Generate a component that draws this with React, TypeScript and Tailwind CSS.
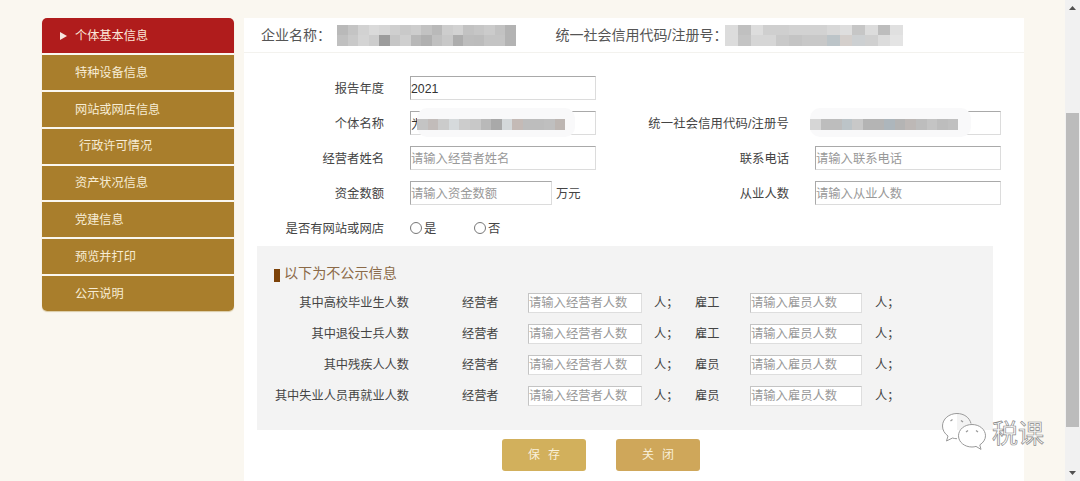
const menu = ["个体基本信息", "特种设备信息", "网站或网店信息", "行政许可情况", "资产状况信息", "党建信息", "预览并打印", "公示说明"];

const hidden = [
  { name: "其中高校毕业生人数", staff: "雇工" },
  { name: "其中退役士兵人数", staff: "雇工" },
  { name: "其中残疾人人数", staff: "雇员" },
  { name: "其中失业人员再就业人数", staff: "雇员" },
];

const nameCells = [
  ["#b9b9b9", "#c4c4c4", "#d2d2d2", "#dadada", "#d6d6d6", "#cfcfcf", "#c9c9c9", "#cdcdcd", "#c2c2c2", "#b9b9b9", "#cdcdcd", "#d2d2d2", "#c2c2c2", "#c6c6c6", "#cbcbcb", "#c2c2c2", "#b3b3b3"],
  ["#c0c0c0", "#c9c9c9", "#d4d4d4", "#cdcdcd", "#9c9c9c", "#c6c6c6", "#cfcfcf", "#b8b8b8", "#b0b0b0", "#c0c0c0", "#c8c8c8", "#adadad", "#bdbdbd", "#bcbcbc", "#c4c4c4", "#c4c4c4", "#b3b3b3"],
];

const codeCells = [
  ["#dcdcdc", "#c0c0c0", "#dddddd", "#cfcfcf", "#cfcfcf", "#d2d2d2", "#d2d2d2", "#d2d2d2", "#d8d8d8", "#dedede", "#c6c6c6", "#dcdcdc", "#bdbdbd", "#e0e0e0"],
  ["#dcdcdc", "#c4c4c4", "#d6d6d6", "#d6d6d6", "#c9c9c9", "#c4c4c4", "#c8c8c8", "#c8c8c8", "#bcc4c8", "#d4cfcc", "#cdd0d2", "#d0d0d0", "#dcdcdc", "#e4e4e4"],
];

const fieldA = ["#c4c4c4", "#c2bcba", "#cbcbcb", "#d6dadc", "#cccccc", "#c8c8c8", "#b9b9b9", "#a9a9a9", "#d4d8da", "#c4bab6", "#bdbdbd", "#bdbdbd", "#bfbfbf", "#bdb6b2"];
const fieldB = ["#d6d6d6", "#bdbdbd", "#bdbdbd", "#bcc4c8", "#c8c8c8", "#b4b4b4", "#b4b4b4", "#adb6bc", "#b4b4b4", "#bdb8b6", "#bdbdbd", "#c4c4c4", "#bdbdbd", "#c0c0c0"];

function Mosaic({ rows, cell }: { rows: string[][]; cell: string }) {
  return (
    <div className="flex flex-col">
      {rows.map((row, i) => (
        <div key={i} className="flex">
          {row.map((c, j) => (
            <div key={j} className={cell} style={{ backgroundColor: c }} />
          ))}
        </div>
      ))}
    </div>
  );
}

function Field({ placeholder, value, width = "w-[186px]" }: { placeholder?: string; value?: string; width?: string }) {
  return (
    <input
      readOnly
      placeholder={placeholder}
      defaultValue={value}
      className={`${width} h-[24px] border border-[#a9a9a9] border-r-[#dcdcdc] border-b-[#dcdcdc] bg-white pt-[2px] text-[12.3px] text-[#333] outline-none placeholder:text-[#999]`}
    />
  );
}

function SmallField({ placeholder, width }: { placeholder: string; width: string }) {
  return (
    <input
      readOnly
      placeholder={placeholder}
      className={`${width} h-[20px] border border-[#c4c4c4] border-r-[#dedede] border-b-[#dedede] bg-white text-[12.3px] outline-none placeholder:text-[#999]`}
    />
  );
}

function Label({ children, width = "w-[140px]" }: { children: React.ReactNode; width?: string }) {
  return <div className={`${width} mr-[26px] shrink-0 pt-[3px] text-right text-[12.3px] text-[#444]`}>{children}</div>;
}

function Blurred({ cells, left, right }: { cells: string[]; left: string; right: string }) {
  return (
    <div className={`absolute -top-[3px] ${left} ${right} flex h-[29px] items-center rounded-[10px] bg-[#f9f9fa] pt-[4px]`}>
      <div className="flex">
        {cells.map((c, i) => (
          <div key={i} className="h-[11px] w-[10.6px]" style={{ backgroundColor: c }} />
        ))}
      </div>
    </div>
  );
}

export default function App() {
  return (
    <div
      className="relative flex h-[481px] w-[1080px] overflow-hidden bg-[#faf7f0]"
      style={{ fontFamily: '"Liberation Sans", "Noto Sans CJK SC", sans-serif' }}
    >
      <div className="flex flex-1 items-start pl-[42px] pt-[18px]">
        <aside className="flex w-[192px] flex-col gap-[2px] overflow-hidden rounded-[5px] shadow-[0_1px_1px_#d9c9a4]">
          {menu.map((item, i) => (
            <div
              key={item}
              className={`flex h-[34.9px] items-center pt-px text-[12.2px] ${i === 0 ? "bg-[#b01c1c] text-[#fbe6d8]" : "bg-[#a97e2c] text-[#f7ecd4]"} ${i === 3 ? "pl-[37px]" : "pl-[33px]"}`}
            >
              {i === 0 && (
                <svg width="7" height="8" viewBox="0 0 7 8" className="-ml-[15px] mr-[8px]">
                  <path d="M0 0l7 4-7 4z" fill="#f7e6df" />
                </svg>
              )}
              {item}
            </div>
          ))}
        </aside>

        <main className="ml-[10px] h-[463px] w-[780px] bg-white">
          <header className="flex h-[35px] items-center border-b border-[#f3f2ee] pl-[17px] text-[14px] text-[#555]">
            <span>企业名称：</span>
            <div className="ml-[6px]">
              <Mosaic rows={nameCells} cell="h-[10.5px] w-[10.5px]" />
            </div>
            <span className="ml-[40px]">统一社会信用代码/注册号：</span>
            <div className="ml-[-2px]">
              <Mosaic rows={codeCells} cell="h-[10.5px] w-[12.7px]" />
            </div>
          </header>

          <div className="pt-[23px]">
            <div className="mb-[11px] flex h-[24px] items-center">
              <Label>报告年度</Label>
              <Field value="2021" />
            </div>
            <div className="mb-[11px] flex h-[24px] items-center">
              <Label>个体名称</Label>
              <div className="relative">
                <Field value="为" />
                <Blurred cells={fieldA} left="left-[7px]" right="pr-[10px]" />
              </div>
              <Label width="w-[193px] tracking-[0.17px]">统一社会信用代码/注册号</Label>
              <div className="relative">
                <Field value="" />
                <Blurred cells={fieldB} left="-left-[5px]" right="pr-[13px]" />
              </div>
            </div>
            <div className="mb-[11px] flex h-[24px] items-center">
              <Label>经营者姓名</Label>
              <Field placeholder="请输入经营者姓名" />
              <Label width="w-[193px]">联系电话</Label>
              <Field placeholder="请输入联系电话" />
            </div>
            <div className="mb-[11px] flex h-[24px] items-center">
              <Label>资金数额</Label>
              <div className="flex w-[186px] items-center">
                <Field placeholder="请输入资金数额" width="w-[142px]" />
                <span className="ml-[4px] pt-[3px] text-[12.3px] text-[#444]">万元</span>
              </div>
              <Label width="w-[193px]">从业人数</Label>
              <Field placeholder="请输入从业人数" />
            </div>
            <div className="flex h-[24px] items-center">
              <Label>是否有网站或网店</Label>
              <label className="flex w-[64px] items-center gap-[2px] pt-[3px] text-[12.3px] text-[#444]">
                <input type="radio" readOnly className="-mt-[3px] size-[12px] appearance-none rounded-full border border-[#777] bg-white" />
                是
              </label>
              <label className="flex items-center gap-[2px] pt-[3px] text-[12.3px] text-[#444]">
                <input type="radio" readOnly className="-mt-[3px] size-[12px] appearance-none rounded-full border border-[#777] bg-white" />
                否
              </label>
            </div>

            <section className="ml-[13px] mt-[6px] h-[184px] w-[736px] bg-[#f3f3f3] pt-[18px]">
              <h3 className="ml-[17px] flex h-[19px] items-center text-[14.1px] leading-none font-normal text-[#8b6a48]">
                <span className="mr-[4px] mt-[3px] h-[13px] w-[6px] bg-[#7c4208]" />
                以下为不公示信息
              </h3>
              <div className="flex flex-col gap-[11px] pt-[10px]">
                {hidden.map((row) => (
                  <div key={row.name} className="flex h-[20px] items-center text-[12.2px] text-[#444]">
                    <div className="w-[152px] shrink-0 text-right whitespace-nowrap">{row.name}</div>
                    <div className="ml-[53px] w-[36px] shrink-0 whitespace-nowrap">经营者</div>
                    <div className="ml-[30px]">
                      <SmallField placeholder="请输入经营者人数" width="w-[114px]" />
                    </div>
                    <div className="ml-[12px] w-[18px] shrink-0 whitespace-nowrap">人；</div>
                    <div className="ml-[23px] w-[25px] shrink-0 whitespace-nowrap">{row.staff}</div>
                    <div className="ml-[30px]">
                      <SmallField placeholder="请输入雇员人数" width="w-[112px]" />
                    </div>
                    <div className="ml-[13px] shrink-0">人；</div>
                  </div>
                ))}
              </div>
            </section>

            <div className="ml-[258px] mt-[9px] flex gap-[30px]">
              <button className="h-[32px] w-[84px] rounded-[3px] bg-[#d2b05c] pl-[8px] text-[12px] tracking-[8px] text-[#f8efd8]">保存</button>
              <button className="h-[32px] w-[84px] rounded-[3px] bg-[#cfa75a] pl-[8px] text-[12px] tracking-[8px] text-[#f8efd8]">关闭</button>
            </div>
          </div>
        </main>
      </div>

      <div className="flex w-[15px] flex-col items-center bg-[#f1f1f1]">
        <svg width="7" height="4" viewBox="0 0 7 4" className="mt-[6px]">
          <path d="M3.5 0L7 4H0z" fill="#505050" />
        </svg>
        <div className="mt-[103px] h-[314px] w-[13px] bg-[#bcbcbc]" />
        <svg width="7" height="4" viewBox="0 0 7 4" className="mt-[44px]">
          <path d="M0 0h7L3.5 4z" fill="#505050" />
        </svg>
      </div>

      <div className="absolute left-[941px] top-[412px] flex items-center">
        <svg width="48" height="40" viewBox="0 0 48 40" fill="none" stroke="#9a9a9a" strokeWidth="1">
          <path d="M16 1.500C8 1.500 1.500 7 1.500 14c0 4 2 7.500 5.500 10l-1.500 5 6-3c1.500.5 3 .7 4.500.7" fill="#fff" />
          <path d="M16 1.500c7 0 12.500 4 14 10" />
          <path d="M31 12.500c-7.500 0-13.500 5-13.500 11.300S23.500 35 31 35c1.500 0 2.700-.2 4-.6l5 3-1.200-4.500c3.500-2.200 5.700-5.600 5.700-9.100C44.500 17.500 38.500 12.500 31 12.500z" fill="#fff" />
          <path d="M9.500 9l2-1.500M20 8.500l2 1.500M25 20l2-1.500M35 18.500l2 1.500" strokeWidth="1.300" />
        </svg>
        <span className="ml-[3px] mt-[4px] text-[26px] leading-none text-white [-webkit-text-stroke:0.7px_#8a8a8a]">
          税课
        </span>
      </div>
    </div>
  );
}
